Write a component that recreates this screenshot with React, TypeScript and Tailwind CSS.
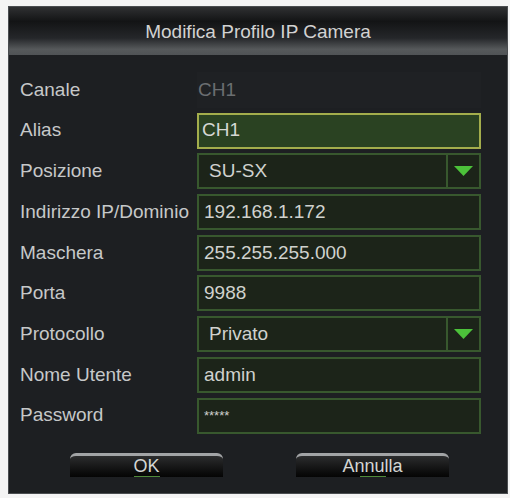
const font = { fontFamily: '"Liberation Sans", Arial, sans-serif' };

type Row = {
  label: string;
  value: string;
  kind: "static" | "focus" | "input" | "select";
};

const rows: Row[] = [
  { label: "Canale", value: "CH1", kind: "static" },
  { label: "Alias", value: "CH1", kind: "focus" },
  { label: "Posizione", value: "SU-SX", kind: "select" },
  { label: "Indirizzo IP/Dominio", value: "192.168.1.172", kind: "input" },
  { label: "Maschera", value: "255.255.255.000", kind: "input" },
  { label: "Porta", value: "9988", kind: "input" },
  { label: "Protocollo", value: "Privato", kind: "select" },
  { label: "Nome Utente", value: "admin", kind: "input" },
  { label: "Password", value: "*****", kind: "input" },
];

function Field({ row }: { row: Row }) {
  if (row.kind === "static") {
    return (
      <div className="flex h-full w-[284px] items-center bg-[#1f2124] pl-[1px] text-[#6b6e71]">
        {row.value}
      </div>
    );
  }
  if (row.kind === "focus") {
    return (
      <div className="flex h-full w-[284px] items-center border-2 border-[#a3ad4c] bg-[#2a4222] pl-[3px] text-[#d6d8d4]">
        {row.value}
      </div>
    );
  }
  if (row.kind === "select") {
    return (
      <div className="flex h-full w-[284px] border-2 border-[#38582e] bg-[#1c2419] text-[#d0d2ce]">
        <div className="flex flex-1 items-center pl-[10px]">{row.value}</div>
        <div className="flex w-[33px] items-center justify-center border-l-2 border-[#38582e]">
          <svg width="19" height="10" viewBox="0 0 19 10">
            <polygon points="0,0 19,0 9.5,10" fill="#4cc23a" />
          </svg>
        </div>
      </div>
    );
  }
  return (
    <div className="flex h-full w-[284px] items-center border-2 border-[#38582e] bg-[#1c2419] pl-[5px] text-[#d0d2ce]">
      {row.value === "*****" ? <span className="text-[13px] leading-none">{row.value}</span> : row.value}
    </div>
  );
}

function Btn({ label }: { label: string }) {
  return (
    <div className="relative flex h-[24px] w-[153px] items-center justify-center rounded-t-[6px] border-t-[3px] border-[#a2a4a6] bg-gradient-to-b from-[#2c2d2e] to-[#050505] text-[18px] text-[#d4d6d4]">
      <span className="leading-none">{label}</span>
      <div className="absolute bottom-0 left-1/2 h-[1px] w-[26px] -translate-x-1/2 bg-[#4f8a3a]" />
    </div>
  );
}

export default function App() {
  return (
    <div className="h-[498px] w-[510px] bg-[#f4f4f4] pl-[8px] pr-[2px] pt-[6px] pb-[4px]" style={font}>
      <div className="flex h-full flex-col border border-[#4a4d50] bg-[#1d1f22]">
        <div className="flex h-[48px] items-center justify-center bg-[linear-gradient(to_bottom,#2f3032_0%,#131415_30%,#25272a_65%,#56595b_88%,#505356_100%)] pt-[2px] text-[19px] text-[#d2d2d2]">
          Modifica Profilo IP Camera
        </div>
        <div className="flex flex-col gap-[4.7px] pl-[11px] pt-[17px] text-[19px]">
          {rows.map((r) => (
            <div key={r.label} className="flex h-[36px] items-center">
              <div className="w-[177px] whitespace-nowrap text-[#c6c8c9]">{r.label}</div>
              <Field row={r} />
            </div>
          ))}
        </div>
        <div className="flex gap-[73px] pl-[61px] pt-[19px]">
          <Btn label="OK" />
          <Btn label="Annulla" />
        </div>
      </div>
    </div>
  );
}
